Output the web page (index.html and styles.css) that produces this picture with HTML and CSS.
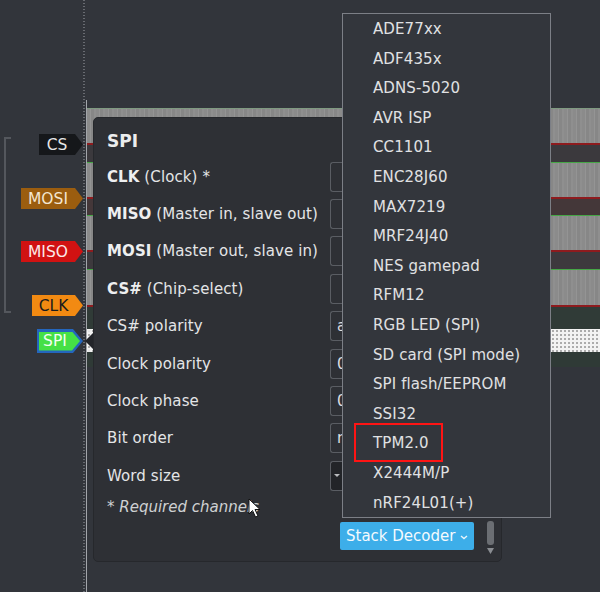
FILE: index.html
```html
<!DOCTYPE html>
<html>
<head>
<meta charset="utf-8">
<link rel="stylesheet" href="styles.css">
</head>
<body>
<div class="app">
  <div class="labels">
    <div class="bracket"></div>
    <div class="lrow h54"><span class="tag tag-cs">CS</span></div>
    <div class="lrow h53"><span class="tag tag-mosi">MOSI</span></div>
    <div class="lrow h54"><span class="tag tag-miso">MISO</span></div>
    <div class="lrow h60"><span class="tag tag-clk">CLK</span></div>
    <div class="lrow-spi"><span class="tag-spi-outer"><span class="tag-spi">SPI</span></span></div>
  </div>
  <div class="ruler"></div>
  <div class="trace-area">
    <div class="traces">
      <div class="trow h54 dark1 first"><div class="band"></div><div class="low"></div></div>
      <div class="trow h53 dark2"><div class="band"></div><div class="low"></div></div>
      <div class="trow h54 dark3"><div class="band"></div><div class="low"></div></div>
      <div class="trow h60 dark4"><div class="band"></div><div class="low"></div></div>
      <div class="decode-row"></div>
      <div class="decode-low"></div>
    </div>
  </div>

  <svg class="pointer" width="10" height="22" viewBox="0 0 10 22">
    <polygon points="3,0 7,0 5,3" fill="#e8e8e8"/>
    <polygon points="10,2 1,11 10,20" fill="#23252a"/>
    <polygon points="3,22 7,22 5,19" fill="#e8e8e8"/>
  </svg>

  <div class="popup">
    <div class="title">SPI</div>
    <div class="form">
      <div class="flabel"><b>CLK</b> (Clock) *</div><div class="combo"></div>
      <div class="flabel"><b>MISO</b> (Master in, slave out)</div><div class="combo"></div>
      <div class="flabel"><b>MOSI</b> (Master out, slave in)</div><div class="combo"></div>
      <div class="flabel"><b>CS#</b> (Chip-select)</div><div class="combo"></div>
      <div class="flabel">CS# polarity</div><div class="combo"><span class="cval">a</span></div>
      <div class="flabel">Clock polarity</div><div class="combo"><span class="cval">0</span></div>
      <div class="flabel">Clock phase</div><div class="combo"><span class="cval">0</span></div>
      <div class="flabel">Bit order</div><div class="combo"><span class="cval">m</span></div>
      <div class="flabel">Word size</div><div class="combo spin"><span class="spin-arrow"></span></div>
    </div>
    <div class="footnote">* Required channels</div>
    <div class="actions">
      <div class="stack-btn">Stack Decoder
        <svg class="chev" width="8" height="5" viewBox="0 0 8 5"><polyline points="1,1 4,3.5 7,1" fill="none" stroke="#e8f4fb" stroke-width="1.4"/></svg>
      </div>
      <div class="scroll">
        <div class="thumb"></div>
        <svg width="7" height="6" viewBox="0 0 7 6"><polygon points="0,0 7,0 3.5,6" fill="#8a8d92"/></svg>
      </div>
    </div>
    <svg class="cursor" width="14" height="20" viewBox="0 0 14 20">
      <path d="M1,1 L1,16 L4.5,12.5 L7.5,19 L10,18 L7,11.5 L12,11.5 Z" fill="#ffffff" stroke="#111" stroke-width="1"/>
    </svg>
  </div>

  <div class="menu">
    <div class="item">ADE77xx</div>
    <div class="item">ADF435x</div>
    <div class="item">ADNS-5020</div>
    <div class="item">AVR ISP</div>
    <div class="item">CC1101</div>
    <div class="item">ENC28J60</div>
    <div class="item">MAX7219</div>
    <div class="item">MRF24J40</div>
    <div class="item">NES gamepad</div>
    <div class="item">RFM12</div>
    <div class="item">RGB LED (SPI)</div>
    <div class="item">SD card (SPI mode)</div>
    <div class="item">SPI flash/EEPROM</div>
    <div class="item">SSI32</div>
    <div class="item">TPM2.0</div>
    <div class="item">X2444M/P</div>
    <div class="item">nRF24L01(+)</div>
    <div class="highlight"></div>
  </div>
</div>
</body>
</html>
```

FILE: styles.css
```css
html, body {
  margin: 0;
  padding: 0;
  background: #32353b;
  width: 600px;
  height: 592px;
  overflow: hidden;
  font-family: "DejaVu Sans", "Noto Sans", sans-serif;
}

.app {
  position: relative;
  display: flex;
  width: 600px;
  height: 592px;
}

/* ---------- label column ---------- */
.labels {
  position: relative;
  width: 83px;
  padding-top: 108px;
  box-sizing: border-box;
  display: flex;
  flex-direction: column;
}

.bracket {
  position: absolute;
  left: 4px;
  top: 137px;
  width: 7px;
  height: 176px;
  border: 2px solid #54575d;
  border-right: none;
  box-sizing: border-box;
}

.lrow {
  display: flex;
  justify-content: flex-end;
  align-items: flex-start;
  padding-top: 26px;
  box-sizing: border-box;
}

.h54 { height: 54px; }
.h53 { height: 53px; }
.h60 { height: 60px; }

.tag {
  display: flex;
  align-items: center;
  justify-content: center;
  height: 21px;
  padding: 0 8px 0 0;
  box-sizing: border-box;
  font-size: 15.5px;
  clip-path: polygon(0 0, calc(100% - 8px) 0, 100% 50%, calc(100% - 8px) 100%, 0 100%);
}

.tag-cs { width: 44px; background: #15171a; color: #e6e6e6; }
.tag-mosi { width: 62px; background: #9b5d0f; color: #f3e6d2; }
.tag-miso { width: 62px; background: #d11212; color: #fbe9e9; }
.tag-clk { width: 51px; background: #f28a12; color: #1b1b1b; }

.lrow-spi {
  display: flex;
  justify-content: flex-end;
  height: 24px;
}

.tag-spi-outer {
  display: flex;
  align-items: center;
  width: 46px;
  height: 24px;
  padding-left: 2px;
  box-sizing: border-box;
  background: #2466bd;
  clip-path: polygon(0 0, calc(100% - 10px) 0, 100% 50%, calc(100% - 10px) 100%, 0 100%);
}

.tag-spi {
  display: flex;
  align-items: center;
  justify-content: center;
  width: 41px;
  height: 19px;
  padding-right: 9px;
  box-sizing: border-box;
  background: #45e046;
  color: #f2fff2;
  font-size: 15.5px;
  clip-path: polygon(0 0, calc(100% - 8px) 0, 100% 50%, calc(100% - 8px) 100%, 0 100%);
}

/* ---------- ruler ---------- */
.ruler {
  width: 3px;
  background: repeating-linear-gradient(180deg, #686b71 0 1px, transparent 1px 3px);
  background-size: 2px 100%;
  background-repeat: no-repeat;
  background-position: 0 0;
}

/* ---------- traces ---------- */
.trace-area {
  flex: 1;
  padding-top: 100px;
}

.traces {
  height: 492px;
  border-left: 1px solid #a3a6ab;
  padding-top: 8px;
  box-sizing: border-box;
}

.trow {
  display: flex;
  flex-direction: column;
}

.band {
  height: 37px;
  border-top: 1px solid #46a646;
  border-bottom: 2px solid #8e1b1e;
  box-sizing: border-box;
  background: repeating-linear-gradient(90deg, #8b8b8b 0 3px, #949494 3px 4px, #878787 4px 7px, #8f8f8f 7px 9px);
}

.first .band { border-top-color: #7f9a80; }

.trow .low { flex: 1; }
.dark1 .low { background: #3b393d; }
.dark2 .low { background: #443739; }
.dark3 .low { background: #3d393d; }
.dark4 .band { height: 38px; }
.dark4 .low { background: #303b37; }

.decode-row {
  height: 23px;
  background-color: #f3f3f3;
  background-image: radial-gradient(circle, #a9a9a9 0.7px, transparent 0.9px);
  background-size: 4px 4px;
}

.decode-low {
  height: 15px;
  background: #2f3a36;
}

.pointer {
  position: absolute;
  left: 84px;
  top: 330px;
}

/* ---------- popup ---------- */
.popup {
  position: absolute;
  left: 93px;
  top: 117px;
  width: 409px;
  height: 445px;
  box-sizing: border-box;
  padding: 11px 0 0 13px;
  background: #2e3035;
  border: 1px solid #26282c;
  border-radius: 5px;
  color: #e4e5e7;
  font-size: 15px;
}

.title {
  font-size: 17px;
  font-weight: bold;
  line-height: 24px;
  color: #eceded;
}

.form {
  margin-top: 5px;
  display: grid;
  grid-template-columns: 223px 12px;
  grid-auto-rows: 37.4px;
  align-items: center;
}

.flabel {
  white-space: nowrap;
  line-height: 20px;
  letter-spacing: 0.1px;
}

.flabel b { color: #eeeff0; }

.combo {
  height: 30px;
  border: 1px solid #5a5d63;
  border-right: none;
  border-radius: 3px 0 0 3px;
  box-sizing: border-box;
  padding-left: 6px;
  line-height: 28px;
  color: #dedfe1;
  white-space: nowrap;
  overflow: hidden;
}

.cval {
  display: inline-block;
  width: 5px;
  overflow: hidden;
  vertical-align: top;
}

.combo.spin {
  background: #222428;
  padding-left: 3px;
  display: flex;
  align-items: center;
}

.spin-arrow {
  width: 0;
  height: 0;
  border-left: 3px solid transparent;
  border-right: 3px solid transparent;
  border-top: 3px solid #b9bbbe;
}

.footnote {
  font-style: italic;
  line-height: 24px;
  color: #cfd0d2;
}

.actions {
  margin-top: 3px;
  margin-left: 233px;
  display: flex;
  gap: 13px;
  align-items: flex-start;
}

.stack-btn {
  width: 134px;
  height: 28px;
  box-sizing: border-box;
  background: #3daee9;
  border-radius: 2px;
  color: #f4fafe;
  padding-left: 6px;
  display: flex;
  align-items: center;
  gap: 5px;
  font-size: 15px;
}

.chev { margin-top: 4px; }

.scroll {
  display: flex;
  flex-direction: column;
  align-items: center;
  gap: 3px;
  margin-top: -1px;
}

.thumb {
  width: 7px;
  height: 24px;
  background: #6b6e73;
  border-radius: 3px;
}

.cursor {
  position: absolute;
  left: 154px;
  top: 380px;
}

/* ---------- dropdown menu ---------- */
.menu {
  position: absolute;
  left: 342px;
  top: 13px;
  width: 209px;
  height: 505px;
  box-sizing: border-box;
  padding-top: 1px;
  background: #33363c;
  border: 1px solid #7c7f86;
  color: #e0e1e3;
  font-size: 15px;
}

.item {
  height: 29.6px;
  line-height: 29.6px;
  padding-left: 30px;
  white-space: nowrap;
  letter-spacing: 0.1px;
}

.highlight {
  position: absolute;
  left: 11px;
  top: 409px;
  width: 89px;
  height: 39px;
  box-sizing: border-box;
  border: 2px solid #ff1414;
}
```
